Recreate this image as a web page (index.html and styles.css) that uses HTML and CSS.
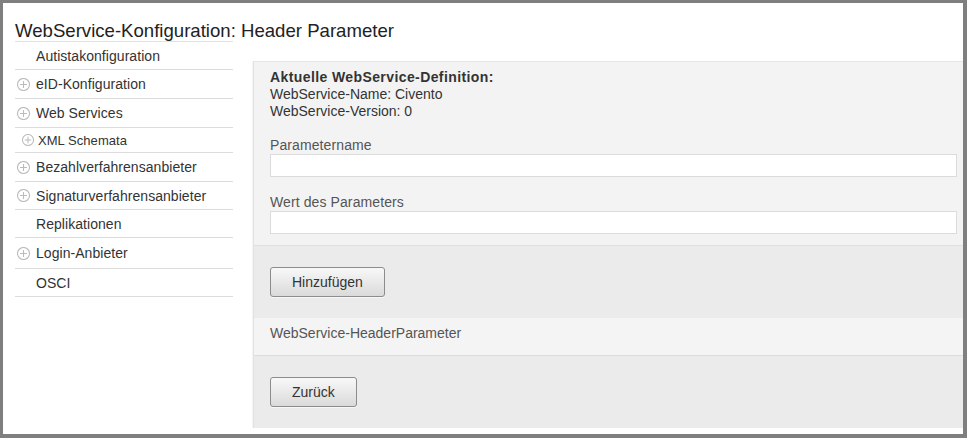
FILE: index.html
```html
<!DOCTYPE html>
<html lang="de">
<head>
<meta charset="utf-8">
<title>WebService-Konfiguration: Header Parameter</title>
<link rel="stylesheet" href="styles.css">
</head>
<body>
<div class="frame">
  <h1 class="title">WebService-Konfiguration: Header Parameter</h1>
  <div class="layout">
    <ul class="menu">
      <li class="menu-item h27"><span class="spacer"></span>Autistakonfiguration</li>
      <li class="menu-item"><svg class="plus" viewBox="0 0 13 13"><circle cx="6.5" cy="6.5" r="6"/><path d="M6.5 3v7M3 6.5h7"/></svg>eID-Konfiguration</li>
      <li class="menu-item"><svg class="plus" viewBox="0 0 13 13"><circle cx="6.5" cy="6.5" r="6"/><path d="M6.5 3v7M3 6.5h7"/></svg>Web Services</li>
      <li class="menu-item sub"><svg class="plus small" viewBox="0 0 13 13"><circle cx="6.5" cy="6.5" r="6"/><path d="M6.5 3v7M3 6.5h7"/></svg>XML Schemata</li>
      <li class="menu-item"><svg class="plus" viewBox="0 0 13 13"><circle cx="6.5" cy="6.5" r="6"/><path d="M6.5 3v7M3 6.5h7"/></svg>Bezahlverfahrensanbieter</li>
      <li class="menu-item h27"><svg class="plus" viewBox="0 0 13 13"><circle cx="6.5" cy="6.5" r="6"/><path d="M6.5 3v7M3 6.5h7"/></svg>Signaturverfahrensanbieter</li>
      <li class="menu-item h27"><span class="spacer"></span>Replikationen</li>
      <li class="menu-item h30"><svg class="plus" viewBox="0 0 13 13"><circle cx="6.5" cy="6.5" r="6"/><path d="M6.5 3v7M3 6.5h7"/></svg>Login-Anbieter</li>
      <li class="menu-item h27"><span class="spacer"></span>OSCI</li>
    </ul>
    <div class="panel">
      <div class="section form">
        <div class="info">
          <div class="info-head">Aktuelle WebService-Definition:</div>
          <div>WebService-Name: Civento</div>
          <div>WebService-Version: 0</div>
        </div>
        <label class="field-label">Parametername</label>
        <div class="input"></div>
        <label class="field-label">Wert des Parameters</label>
        <div class="input"></div>
      </div>
      <div class="section actions">
        <button class="btn">Hinzufügen</button>
      </div>
      <div class="list-row">WebService-HeaderParameter</div>
      <div class="section actions last">
        <button class="btn">Zurück</button>
      </div>
    </div>
  </div>
</div>
</body>
</html>
```
FILE: styles.css
```css
* { box-sizing: border-box; }
html, body { margin: 0; padding: 0; background: #fff; }
body { font-family: "Liberation Sans", Arial, sans-serif; font-size: 14px; color: #333; }

.frame {
  width: 967px;
  height: 438px;
  border-style: solid;
  border-color: #7f7f7f;
  border-width: 3px 4px 4px 3px;
  padding: 18px 0 5px 12px;
  display: flex;
  flex-direction: column;
  overflow: hidden;
}

.title {
  margin: 0;
  font-size: 18.6px;
  line-height: 20px;
  font-weight: normal;
  color: #222;
}

.layout {
  display: flex;
  align-items: flex-start;
  flex: 1;
}

.menu {
  list-style: none;
  margin: 0;
  padding: 0;
  width: 218px;
  border-top: 1px solid #e2e2e2;
  flex: none;
}

.menu-item {
  display: flex;
  align-items: center;
  height: 29px;
  padding-left: 2px;
  border-bottom: 1px solid #dcdcdc;
  color: #333;
  font-size: 14px;
  letter-spacing: 0.05px;
  white-space: nowrap;
}
.menu-item.h27 { height: 28px; }
.menu-item.h30 { height: 31px; }
.menu-item.sub { height: 25px; font-size: 13px; padding-left: 7px; }

.spacer { width: 13px; margin-right: 6px; flex: none; }

.plus {
  width: 13px;
  height: 13px;
  margin-right: 6px;
  flex: none;
  fill: none;
  stroke: #bcbcbc;
  stroke-width: 1.1;
}
.plus.small { width: 12px; height: 12px; margin-right: 4px; }

.panel {
  flex: 1;
  margin-left: 20px;
  margin-top: 20px;
  border-top: 1px solid #e6e6e6;
  border-left: 1px solid #e2e2e2;
  box-shadow: -1px 0 1px rgba(0,0,0,0.04);
  background: #f3f3f3;
}

.section { padding: 0 6px 0 16px; }

.form { padding-top: 7px; padding-bottom: 11px; }

.info { line-height: 17px; color: #333; }
.info-head { font-weight: bold; letter-spacing: 0.4px; }

.field-label {
  display: block;
  margin-top: 17px;
  line-height: 17px;
  color: #555;
  letter-spacing: 0.1px;
}

.input {
  height: 23px;
  background: #fff;
  border: 1px solid #dcdcdc;
}

.actions {
  background: #ebebeb;
  padding-top: 21px;
  padding-bottom: 21px;
}
.form + .actions { border-top: 1px solid #e0e0e0; }

.btn {
  display: block;
  height: 30px;
  padding: 0 21px;
  border: 1px solid #8c8c8c;
  border-radius: 3px;
  background: linear-gradient(#f8f8f8, #dadada);
  font-family: "Liberation Sans", Arial, sans-serif;
  font-size: 14px;
  color: #333;
  box-shadow: 0 1px 0 rgba(255,255,255,0.6);
}

.list-row {
  height: 38px;
  padding: 7px 6px 0 16px;
  line-height: 17px;
  background: #f4f4f4;
  border-bottom: 1px solid #dcdcdc;
  color: #555;
}
```
